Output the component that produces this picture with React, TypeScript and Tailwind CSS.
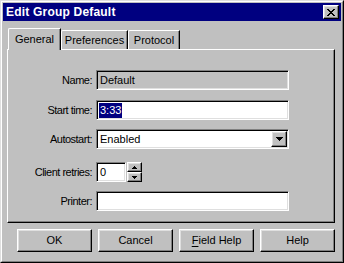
import React from 'react';

const raised =
  'border border-t-white border-l-white border-r-black border-b-black shadow-[inset_-1px_-1px_0_#808080,inset_1px_1px_0_#dfdfdf]';
const sunken =
  'border border-t-[#808080] border-l-[#808080] border-r-white border-b-white shadow-[inset_1px_1px_0_#000,inset_-1px_-1px_0_#dfdfdf]';

const Label: React.FC<{ children: React.ReactNode }> = ({ children }) => (
  <div className="w-[84px] text-right tracking-[-0.5px]">{children}</div>
);

const Btn: React.FC<{ children: React.ReactNode }> = ({ children }) => (
  <button className={`w-[75px] h-[23px] bg-[#c0c0c0] flex items-center justify-center ${raised}`}>
    {children}
  </button>
);

const App: React.FC = () => {
  return (
    <div className="w-[344px] h-[263px] bg-[#c0c0c0] font-['Liberation_Sans',Arial,sans-serif] text-[11px] text-black leading-none">
      <div className="h-full border border-t-[#dfdfdf] border-l-[#dfdfdf] border-r-black border-b-black">
        <div className="h-full border border-t-white border-l-white border-r-[#808080] border-b-[#808080] p-px flex flex-col">
          {/* Title bar */}
          <div className="h-[18px] bg-[#000080] flex items-center justify-between pl-[3px] pr-[2px]">
            <span className="text-white font-bold text-[12px] tracking-[0.2px]">Edit Group Default</span>
            <div className={`w-[16px] h-[14px] bg-[#c0c0c0] flex items-center justify-center ${raised}`}>
              <svg width="8" height="7" viewBox="0 0 8 7" shapeRendering="crispEdges">
                <path d="M0 0h2v1H0zM6 0h2v1H6zM1 1h2v1H1zM5 1h2v1H5zM2 2h4v1H2zM3 3h2v1H3zM2 4h4v1H2zM1 5h2v1H1zM5 5h2v1H5zM0 6h2v1H0zM6 6h2v1H6z" fill="#000" />
              </svg>
            </div>
          </div>

          {/* Body */}
          <div className="flex-1 flex flex-col pl-[4px] pr-[6px] pt-[7px]">
            {/* Tabs */}
            <div className="h-[21px] flex items-end pl-[1px] relative z-10">
              <div className="w-[53px] h-[22px] -mb-px bg-[#c0c0c0] border-t border-l border-white border-r border-r-black rounded-tl-[2px] shadow-[inset_-1px_0_0_#808080] flex items-start justify-center pt-[5px]">
                General
              </div>
              <div className="w-[67px] h-[19px] bg-[#c0c0c0] border-t border-l border-white border-r border-r-black rounded-tl-[2px] shadow-[inset_-1px_0_0_#808080] flex items-start justify-center pt-[4px]">
                Preferences
              </div>
              <div className="w-[52px] h-[19px] bg-[#c0c0c0] border-t border-l border-white border-r border-r-black rounded-tl-[2px] shadow-[inset_-1px_0_0_#808080] flex items-start justify-center pt-[4px]">
                Protocol
              </div>
            </div>

            {/* Panel */}
            <div className="h-[174px] border border-t-white border-l-white border-r-black border-b-black shadow-[inset_-1px_-1px_0_#808080] flex flex-col">
              <div className="flex items-center gap-[4px] mt-[20px]">
                <Label>Name:</Label>
                <div className={`w-[193px] h-[20px] bg-[#c0c0c0] flex items-center pl-[3px] ${sunken}`}>Default</div>
              </div>
              <div className="flex items-center gap-[4px] mt-[10px]">
                <Label>Start time:</Label>
                <div className={`w-[193px] h-[20px] bg-white flex items-center pl-[2px] ${sunken}`}>
                  <span className="bg-[#000080] text-white px-px py-[2px]">3:33</span>
                </div>
              </div>
              <div className="flex items-center gap-[4px] mt-[9px]">
                <Label>Autostart:</Label>
                <div className={`w-[193px] h-[20px] bg-white flex items-center justify-between pl-[3px] pr-[1px] ${sunken}`}>
                  <span>Enabled</span>
                  <div className={`w-[16px] h-[16px] bg-[#c0c0c0] flex items-center justify-center ${raised}`}>
                    <svg width="7" height="4" viewBox="0 0 7 4" shapeRendering="crispEdges">
                      <path d="M0 0h7v1H0zM1 1h5v1H1zM2 2h3v1H2zM3 3h1v1H3z" fill="#000" />
                    </svg>
                  </div>
                </div>
              </div>
              <div className="flex items-center gap-[4px] mt-[13px]">
                <Label>Client retries:</Label>
                <div className="flex items-center">
                  <div className={`w-[30px] h-[20px] bg-white flex items-center pl-[3px] ${sunken}`}>0</div>
                  <div className="flex flex-col ml-px">
                    <div className={`w-[15px] h-[10px] bg-[#c0c0c0] flex items-center justify-center ${raised}`}>
                      <svg width="5" height="3" viewBox="0 0 5 3" shapeRendering="crispEdges">
                        <path d="M2 0h1v1H2zM1 1h3v1H1zM0 2h5v1H0z" fill="#000" />
                      </svg>
                    </div>
                    <div className={`w-[15px] h-[10px] bg-[#c0c0c0] flex items-center justify-center ${raised}`}>
                      <svg width="5" height="3" viewBox="0 0 5 3" shapeRendering="crispEdges">
                        <path d="M0 0h5v1H0zM1 1h3v1H1zM2 2h1v1H2z" fill="#000" />
                      </svg>
                    </div>
                  </div>
                </div>
              </div>
              <div className="flex items-center gap-[4px] mt-[9px]">
                <Label>Printer:</Label>
                <div className={`w-[193px] h-[20px] bg-white ${sunken}`}></div>
              </div>
            </div>

            {/* Buttons */}
            <div className="flex justify-end gap-[6px] mt-[6px]">
              <Btn>OK</Btn>
              <Btn>Cancel</Btn>
              <Btn>
                <span>
                  <span className="underline underline-offset-2">F</span>ield Help
                </span>
              </Btn>
              <Btn>Help</Btn>
            </div>
          </div>
        </div>
      </div>
    </div>
  );
};

export default App;
